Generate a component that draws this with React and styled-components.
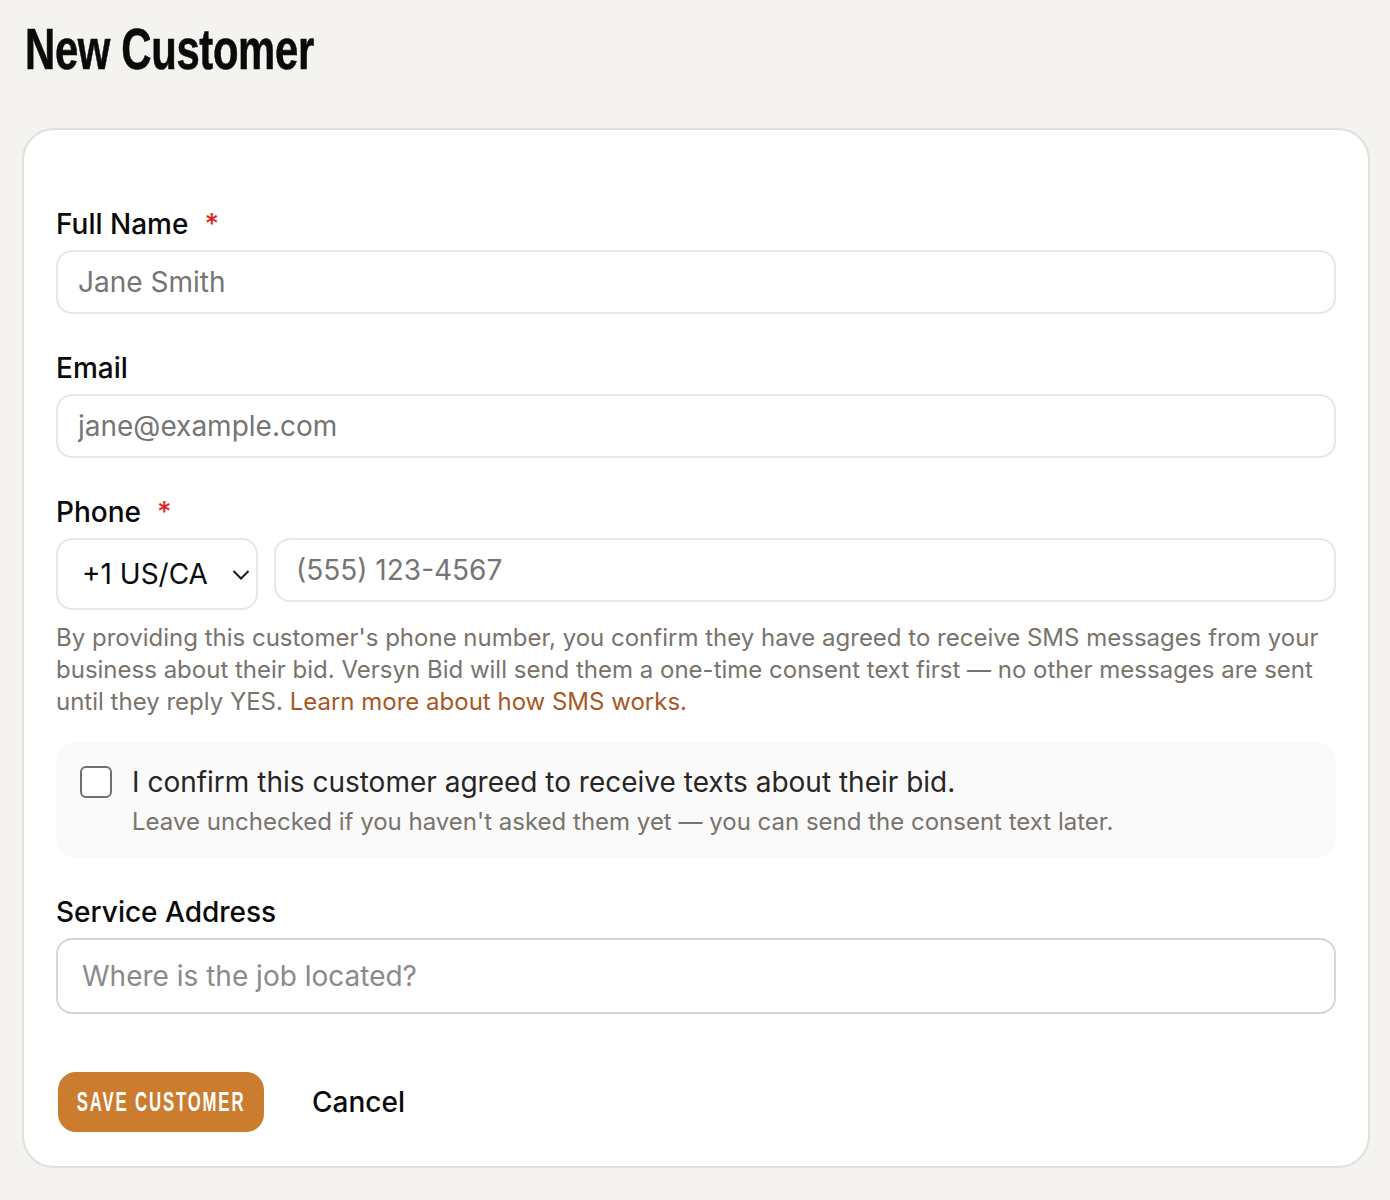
import React from 'react';
import styled, { createGlobalStyle } from 'styled-components';

const GlobalStyle = createGlobalStyle`
    * { box-sizing: border-box; }
    html, body { margin: 0; padding: 0; }
    body {
        background-color: #f4f3ef;
        font-family: "Inter", "Liberation Sans", sans-serif;
        color: #0a0a0a;
    }
`;

const Page = styled.div`
    padding: 16px 20px 32px 22px;
`;

// no condensed family is installed, so the narrow headline font is squeezed
const Title = styled.h1`
    margin: 0 0 64px 3px;
    height: 48px;
    font-family: "Liberation Sans", sans-serif;
    font-size: 58px;
    line-height: 66px;
    font-weight: 700;
    color: #0a0a0a;
    letter-spacing: -0.5px;
    white-space: nowrap;
    -webkit-text-stroke: 0.6px #0a0a0a;
    transform: scaleX(0.722);
    transform-origin: left center;
`;

const Card = styled.form`
    background-color: #fff;
    border: 2px solid #e0dfda;
    border-radius: 32px;
    padding: 78px 32px 34px;
    display: flex;
    flex-direction: column;
`;

const Field = styled.div`
    margin-bottom: ${props => props.$gap || 38}px;
`;

const Label = styled.label`
    display: block;
    font-size: 28px;
    line-height: 32px;
    font-weight: 500;
    color: #0a0a0a;
    margin-bottom: 10px;
`;

const Required = styled.span`
    color: #dc2626;
    margin-left: 16px;
`;

const Input = styled.input`
    display: block;
    width: 100%;
    height: ${props => props.$tall ? 76 : 64}px;
    padding: 0 ${props => props.$tall ? 24 : 20}px;
    background-color: #fff;
    border: 2px solid ${props => props.$tall ? '#d9d6d2' : '#e7e7e7'};
    border-radius: 16px;
    font-family: inherit;
    font-size: 28px;
    color: #0a0a0a;
    outline: none;

    &::placeholder {
        color: ${props => props.$tall ? '#8a8a8a' : '#757575'};
        opacity: 1;
    }
`;

const PhoneRow = styled.div`
    display: flex;
    align-items: flex-start;
    gap: 16px;
`;

const SelectWrap = styled.div`
    position: relative;
    flex: 0 0 202px;
    height: 72px;
`;

const Select = styled.select`
    appearance: none;
    width: 100%;
    height: 100%;
    padding: 0 0 0 24px;
    background-color: #fff;
    border: 2px solid #e7e7e7;
    border-radius: 16px;
    font-family: inherit;
    font-size: 28px;
    color: #0a0a0a;
    outline: none;
`;

const Chevron = styled.svg`
    position: absolute;
    top: 31px;
    right: 8px;
    pointer-events: none;
`;

const Help = styled.p`
    margin: 12px 0 24px;
    font-size: 24px;
    line-height: 32px;
    color: #78736c;
`;

const HelpLink = styled.a`
    color: #a9571f;
    text-decoration: none;
`;

const ConsentBox = styled.div`
    display: flex;
    align-items: flex-start;
    gap: 20px;
    height: 116px;
    padding: 24px;
    background-color: #fafafa;
    border-radius: 20px;
    margin-bottom: 38px;
`;

const CheckBox = styled.input`
    appearance: none;
    flex: 0 0 32px;
    width: 32px;
    height: 32px;
    margin: 0;
    background-color: #fff;
    border: 2px solid #6f6f6f;
    border-radius: 6px;
`;

const ConsentText = styled.div`
    display: flex;
    flex-direction: column;
`;

const ConsentTitle = styled.span`
    font-size: 28px;
    line-height: 32px;
    color: #292524;
`;

const ConsentNote = styled.span`
    margin-top: 8px;
    font-size: 24px;
    line-height: 32px;
    color: #78736c;
`;

const Actions = styled.div`
    display: flex;
    align-items: center;
    gap: 48px;
    padding-left: 2px;
`;

const SaveButton = styled.button`
    display: flex;
    align-items: center;
    justify-content: center;
    width: 206px;
    height: 60px;
    padding: 0;
    background-color: #cb7c2f;
    border: none;
    border-radius: 18px;
    overflow: hidden;
`;

const SaveLabel = styled.span`
    font-family: "Liberation Sans", sans-serif;
    font-size: 27px;
    font-weight: 700;
    letter-spacing: 3px;
    color: #fff;
    white-space: nowrap;
    transform: scaleX(0.62);
`;

const CancelLink = styled.a`
    font-size: 28px;
    line-height: 60px;
    font-weight: 500;
    color: #0a0a0a;
`;

const App = () => {
    return (
        <Page>
            <GlobalStyle />
            <Title>New Customer</Title>
            <Card>
                <Field>
                    <Label>Full Name<Required>*</Required></Label>
                    <Input placeholder="Jane Smith" />
                </Field>
                <Field>
                    <Label>Email</Label>
                    <Input placeholder="jane@example.com" />
                </Field>
                <Label>Phone<Required>*</Required></Label>
                <PhoneRow>
                    <SelectWrap>
                        <Select defaultValue="+1">
                            <option value="+1">+1 US/CA</option>
                        </Select>
                        <Chevron width="18" height="12" viewBox="0 0 18 12" fill="none" stroke="#1a1a1a" strokeWidth="2">
                            <path d="M1.5 2 L9 9.5 L16.5 2" />
                        </Chevron>
                    </SelectWrap>
                    <Input placeholder="(555) 123-4567" />
                </PhoneRow>
                <Help>
                    By providing this customer's phone number, you confirm they have agreed to receive SMS messages from your business about their bid. Versyn Bid will send them a one-time consent text first — no other messages are sent until they reply YES. <HelpLink href="#">Learn more about how SMS works.</HelpLink>
                </Help>
                <ConsentBox>
                    <CheckBox type="checkbox" />
                    <ConsentText>
                        <ConsentTitle>I confirm this customer agreed to receive texts about their bid.</ConsentTitle>
                        <ConsentNote>Leave unchecked if you haven't asked them yet — you can send the consent text later.</ConsentNote>
                    </ConsentText>
                </ConsentBox>
                <Field $gap={58}>
                    <Label>Service Address</Label>
                    <Input $tall placeholder="Where is the job located?" />
                </Field>
                <Actions>
                    <SaveButton type="button"><SaveLabel>SAVE CUSTOMER</SaveLabel></SaveButton>
                    <CancelLink>Cancel</CancelLink>
                </Actions>
            </Card>
        </Page>
    );
};

export default App;
